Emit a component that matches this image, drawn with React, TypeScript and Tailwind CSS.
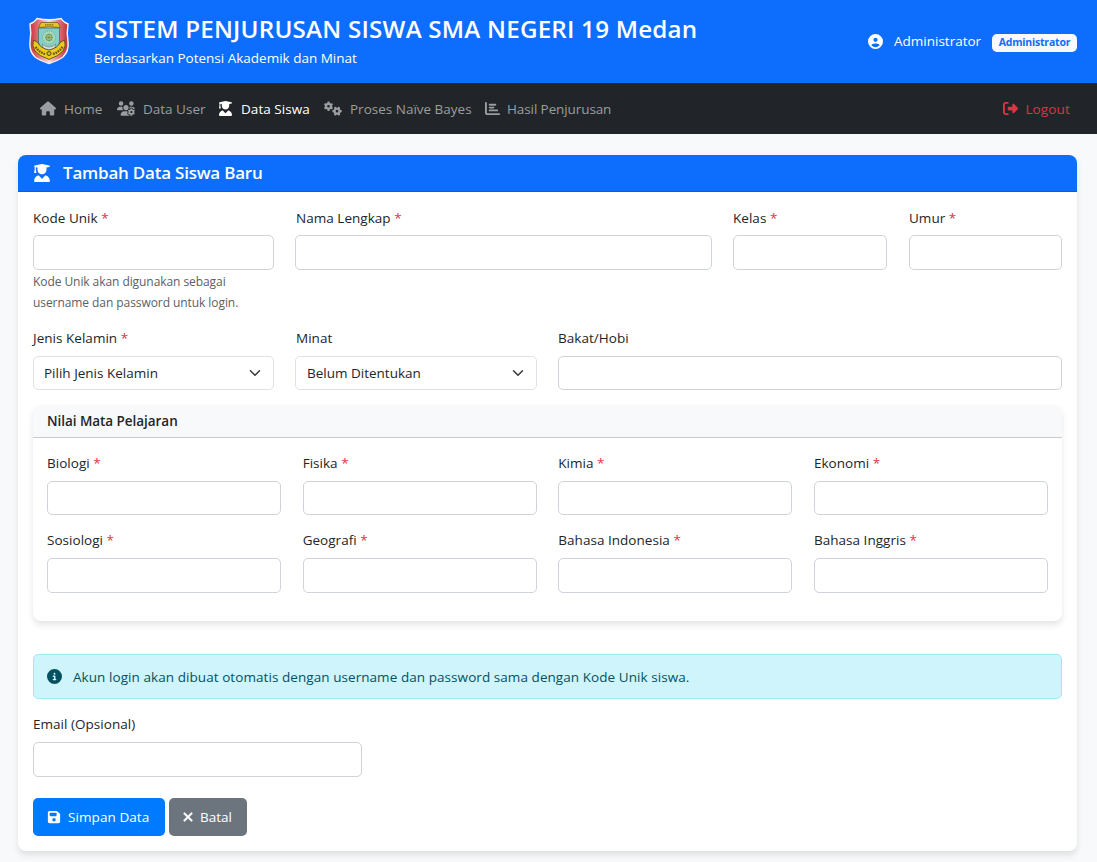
import type { ReactNode } from 'react';
import {
  FaHouse, FaUsersGear, FaUserGraduate, FaGears, FaChartBar, FaRightFromBracket,
  FaCircleUser, FaFloppyDisk, FaXmark, FaCircleInfo,
} from 'react-icons/fa6';

function Field({ label, required, className = '', inputClass = 'h-[35px]', labelClass = 'mb-[7px]', children }: {
  label: string; required?: boolean; className?: string; inputClass?: string; labelClass?: string; children?: ReactNode;
}) {
  return (
    <div className={className}>
      <label className={`block h-[21px] whitespace-nowrap leading-[21px] tracking-[0.03px] ${labelClass}`}>
        {label}
        {required && <span className="text-[#dc3545]"> *</span>}
      </label>
      {children ?? <input className={`block w-full rounded-[5px] border border-[#ced4da] bg-white px-3 outline-none ${inputClass}`} />}
    </div>
  );
}

function SelectBox({ value, className }: { value: string; className: string }) {
  return (
    <button className={`flex h-[34px] w-full items-center justify-between rounded-[5px] border border-[#dee2e6] bg-white pr-[12px] ${className}`}>
      <span>{value}</span>
      <svg viewBox="0 0 16 16" className="size-[12px]" fill="none" stroke="#343a40" strokeWidth="2" strokeLinecap="round" strokeLinejoin="round">
        <path d="m2 5 6 6 6-6" />
      </svg>
    </button>
  );
}

function Crest() {
  return (
    <svg viewBox="0 0 42 48" className="h-[48px] w-[42px]">
      <defs>
        <linearGradient id="rim" x1="0" x2="1">
          <stop offset="0" stopColor="#c8303c" />
          <stop offset=".2" stopColor="#e06a72" />
          <stop offset=".5" stopColor="#f7dede" />
          <stop offset=".8" stopColor="#de646e" />
          <stop offset="1" stopColor="#c02a38" />
        </linearGradient>
      </defs>
      <path d="M9 1.5Q21 4 33 1.5Q35 5 40 7Q38.500 16 40 25Q41 34 35 40Q30 43.500 21 46.500Q12 43.500 7 40Q1 34 2 25Q3.500 16 2 7Q7 5 9 1.500Z" fill="url(#rim)" stroke="#f4eef3" strokeWidth="1.500" />
      <path d="M10.500 11H31.500V25Q31.500 32 21 36Q10.500 32 10.500 25Z" fill="#83cfca" stroke="#476d66" strokeWidth=".8" />
      <path d="M13 5.500H30L32.500 10.500Q21 9 10.500 10.500Z" fill="#e9c51f" stroke="#6d601e" strokeWidth=".8" />
      <path d="M17 7.800H26" stroke="#796515" strokeWidth="1.300" strokeDasharray="1.500 .7" />
      <circle cx="21" cy="20.500" r="6.500" fill="#a8d8b5" stroke="#6fae94" strokeWidth="1" strokeDasharray="1 1" />
      <circle cx="21" cy="20.500" r="3.200" fill="#dfca4b" stroke="#62a07c" strokeWidth="1" />
      <path d="M21 16.500V24.500M17 20.500H25M18 17.500L24 23.500M24 17.500L18 23.500" stroke="#4b8a78" strokeWidth=".6" />
      <path d="M14 27Q21 33 28 27L27 31Q21 36 15 31Z" fill="#d6dfda" stroke="#777d76" strokeWidth=".7" />
      <path d="M5.500 23L10 25.500Q12 31 21 33Q30 31 32 25.500L36.500 23Q38.500 29 35 34Q31 39 21 42.500Q11 39 7 34Q3.500 29 5.500 23Z" fill="#edc918" stroke="#554b25" strokeWidth=".9" />
      <path d="M7.500 30Q11 35 17 37M25 37Q31 35 34.500 30" fill="none" stroke="#64541b" strokeWidth="2.200" strokeDasharray="1.700 .9" />
      <circle cx="21" cy="36.500" r="2" fill="#d7b833" stroke="#4c4930" />
    </svg>
  );
}

const navItems = [
  { label: 'Home', Icon: FaHouse, cls: 'w-[77px] tracking-[0.1px]', icon: 'w-[16px] h-[15px] mr-[8px]' },
  { label: 'Data User', Icon: FaUsersGear, cls: 'w-[102px]', icon: 'w-[18px] h-[15px] mr-[8px]' },
  { label: 'Data Siswa', Icon: FaUserGraduate, cls: 'w-[105px] text-white tracking-[0.05px]', icon: 'w-[13px] h-[15px] mr-[9px]' },
  { label: 'Proses Naïve Bayes', Icon: FaGears, cls: 'w-[161px]', icon: 'w-[18px] h-[15px] mr-[8px]' },
  { label: 'Hasil Penjurusan', Icon: FaChartBar, cls: 'tracking-[-0.1px]', icon: 'w-[15px] h-[15px] mr-[7px]' },
];

const scores = ['Biologi', 'Fisika', 'Kimia', 'Ekonomi', 'Sosiologi', 'Geografi', 'Bahasa Indonesia', 'Bahasa Inggris'];

export default function App() {
  return (
    <div className="h-[862px] overflow-hidden bg-[#f8f9fa] font-['Open_Sans','Noto_Sans',sans-serif] text-[13.5px] text-[#212529]">
      <header className="flex h-[83px] items-start bg-[#0d6efd] text-white">
        <div className="ml-[28px] mt-[17px] w-[66px] shrink-0"><Crest /></div>
        <div className="whitespace-nowrap pt-[12px]">
          <h1 className="text-[24.2px] font-semibold leading-[34px] tracking-[0.21px]">SISTEM PENJURUSAN SISWA SMA NEGERI 19 Medan</h1>
          <p className="mt-[1px] leading-[22px]">Berdasarkan Potensi Akademik dan Minat</p>
        </div>
        <div className="ml-auto mr-[20px] flex h-[82px] items-center whitespace-nowrap">
          <FaCircleUser className="mr-[11px] size-[15px]" />
          <span className="w-[98px]">Administrator</span>
          <span className="mt-[3px] flex h-[18px] w-[85px] items-center justify-center rounded-[5px] bg-[#f8f9fa] text-[10.5px] font-bold tracking-[-0.2px] text-[#0d6efd]">Administrator</span>
        </div>
      </header>
      <nav className="flex h-[51px] items-center whitespace-nowrap bg-[#212529] pl-[40px] pr-[27px] text-[#9b9d9e]">
        {navItems.map(({ label, Icon, cls, icon }) => (
          <a key={label} className={`flex shrink-0 items-center ${cls}`}>
            <Icon className={`shrink-0 ${icon}`} /><span className="pt-[2px]">{label}</span>
          </a>
        ))}
        <a className="ml-auto flex items-center tracking-[0.15px] text-[#dc3545]"><FaRightFromBracket className="mr-[7px] size-[15px]" /><span className="pt-[2px]">Logout</span></a>
      </nav>
      <main className="ml-[18px] mr-[20px] mt-[21px] h-[696px] rounded-[8px] bg-white shadow-[0_4px_6px_rgba(0,0,0,0.1)]">
        <div className="flex h-[37px] items-center rounded-t-[8px] border-b border-[#0b5cd5] bg-[#0d6efd] pl-[15px] text-[17px] font-semibold tracking-[-0.22px] text-white">
          <FaUserGraduate className="mr-[12px] h-[18px] w-[18px]" />Tambah Data Siswa Baru
        </div>
        <div className="px-[15px] pt-[15px]">
          <div className="flex h-[121px]">
            <div className="mr-[21px] w-[241px]">
              <Field label="Kode Unik" required labelClass="mt-px mb-[6px]" />
              <p className="mt-[1px] whitespace-nowrap text-[12px] leading-[21px] tracking-[-0.07px] text-[#5b6065]">Kode Unik akan digunakan sebagai<br />username dan password untuk login.</p>
            </div>
            <Field className="mr-[21px] w-[417px]" label="Nama Lengkap" required labelClass="mt-px mb-[6px] pl-px" />
            <Field className="mr-[22px] w-[154px]" label="Kelas" required labelClass="mt-px mb-[6px]" />
            <Field className="w-[153px]" label="Umur" required labelClass="mt-px mb-[6px]" />
          </div>
          <div className="flex h-[77px] gap-[21px]">
            <Field className="w-[241px]" label="Jenis Kelamin" required><SelectBox className="pl-[10px]" value="Pilih Jenis Kelamin" /></Field>
            <Field className="w-[242px]" label="Minat" labelClass="mb-[7px] pl-px"><SelectBox className="pl-[11px]" value="Belum Ditentukan" /></Field>
            <Field className="w-[504px]" label="Bakat/Hobi" inputClass="h-[34px]" />
          </div>
          <section className="h-[216px] rounded-[8px] bg-white shadow-[0_4px_6px_rgba(0,0,0,0.1)]">
            <h2 className="h-[33px] rounded-t-[8px] border-b border-[#c8cbce] bg-[#f8f9fa] px-[14px] font-semibold leading-[32px] tracking-[-0.05px]">Nilai Mata Pelajaran</h2>
            <div className="grid auto-rows-[77px] grid-cols-4 gap-x-[21.6px] px-[14px] pt-[15px]">
              {scores.map((s, i) => <Field key={s} label={s} required inputClass={i < 4 ? 'h-[34px]' : 'h-[35px]'} />)}
            </div>
          </section>
          <div className="mt-[33px] flex h-[45px] items-center rounded-[5px] border border-[#9eeaf9] bg-[#cff4fc] pl-[13px] tracking-[0.065px] text-[#055160]">
            <FaCircleInfo className="mr-[11px] size-[15px]" /><span className="pt-[2px]">Akun login akan dibuat otomatis dengan username dan password sama dengan Kode Unik siswa.</span>
          </div>
          <Field className="mt-[15px] w-[329px]" label="Email (Opsional)" />
          <div className="mt-[21px] flex gap-[4px] whitespace-nowrap text-white">
            <button className="flex h-[38px] w-[132px] items-center rounded-[5px] bg-[#007bff] pl-[14px] tracking-[0.08px]"><FaFloppyDisk className="mr-[7px] size-[14px]" />Simpan Data</button>
            <button className="flex h-[38px] w-[78px] items-center rounded-[5px] bg-[#6c757d] pl-[12px]"><FaXmark className="mr-[5px] size-[14px]" stroke="currentColor" strokeWidth="18" />Batal</button>
          </div>
        </div>
      </main>
    </div>
  );
}
